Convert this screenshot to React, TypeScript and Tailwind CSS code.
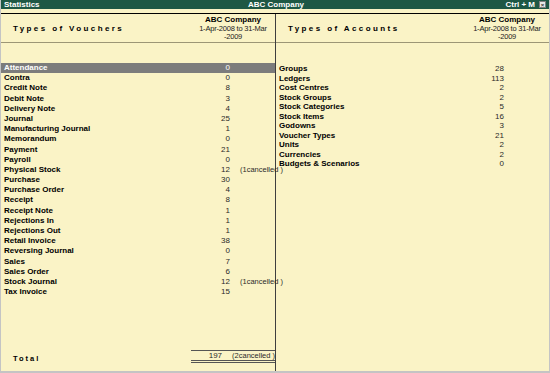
import React from 'react';

type Row = { name: string; value: string; note?: string };

const vouchers: Row[] = [
  { name: 'Attendance', value: '0' },
  { name: 'Contra', value: '0' },
  { name: 'Credit Note', value: '8' },
  { name: 'Debit Note', value: '3' },
  { name: 'Delivery Note', value: '4' },
  { name: 'Journal', value: '25' },
  { name: 'Manufacturing Journal', value: '1' },
  { name: 'Memorandum', value: '0' },
  { name: 'Payment', value: '21' },
  { name: 'Payroll', value: '0' },
  { name: 'Physical Stock', value: '12', note: '(1cancelled )' },
  { name: 'Purchase', value: '30' },
  { name: 'Purchase Order', value: '4' },
  { name: 'Receipt', value: '8' },
  { name: 'Receipt Note', value: '1' },
  { name: 'Rejections In', value: '1' },
  { name: 'Rejections Out', value: '1' },
  { name: 'Retail Invoice', value: '38' },
  { name: 'Reversing Journal', value: '0' },
  { name: 'Sales', value: '7' },
  { name: 'Sales Order', value: '6' },
  { name: 'Stock Journal', value: '12', note: '(1cancelled )' },
  { name: 'Tax Invoice', value: '15' },
];

const accounts: Row[] = [
  { name: 'Groups', value: '28' },
  { name: 'Ledgers', value: '113' },
  { name: 'Cost Centres', value: '2' },
  { name: 'Stock Groups', value: '2' },
  { name: 'Stock Categories', value: '5' },
  { name: 'Stock Items', value: '16' },
  { name: 'Godowns', value: '3' },
  { name: 'Voucher Types', value: '21' },
  { name: 'Units', value: '2' },
  { name: 'Currencies', value: '2' },
  { name: 'Budgets & Scenarios', value: '0' },
];

const ColumnHeader: React.FC<{ title: string }> = ({ title }) => (
  <div className="h-[29px] flex items-center border-b border-[#9c9676]">
    <div className="flex-1 pl-[12px] pt-[2px] text-[8px] font-bold tracking-[2.4px] text-black whitespace-nowrap">{title}</div>
    <div className="w-[84px] pt-[2px] text-center text-[7.5px] leading-[8.8px] tracking-[-0.2px] text-[#222] whitespace-nowrap">
      <div className="font-bold text-black text-[8px] tracking-normal">ABC Company</div>
      <div>1-Apr-2008 to 31-Mar</div>
      <div>-2009</div>
    </div>
  </div>
);

const ListRow: React.FC<{ row: Row; active?: boolean; tall?: boolean }> = ({ row, active, tall }) => (
  <div
    className={
      (tall ? 'h-[10.2px] leading-[10.2px] ' : 'h-[9.5px] leading-[9.5px] ') +
      'flex items-center text-[8px] ' +
      (active ? 'bg-[#7c7c7c] text-white' : 'text-black')
    }
  >
    <span className="flex-1 pl-[3px] font-bold whitespace-nowrap">{row.name}</span>
    <span className={'w-[40px] text-right ' + (active ? 'text-white' : 'text-[#2a2a2a]')}>{row.value}</span>
    <span className="w-[45px] pl-[10px] text-[7.5px] text-[#2a2a2a] whitespace-nowrap">{row.note}</span>
  </div>
);

export default function App() {
  return (
    <div className="w-[550px] h-[373px] flex flex-col bg-[#faf3c6] border-x border-b-2 border-[#c4c4c4] font-['Liberation_Sans',Arial,sans-serif] overflow-hidden">
      {/* title bar */}
      <div className="h-[9px] bg-[#1e5845] flex items-center px-[3px] text-white text-[8px] font-bold leading-[9px] relative">
        <span>Statistics</span>
        <span className="absolute left-[225px] w-[100px] text-center whitespace-nowrap">ABC Company</span>
        <span className="ml-auto mr-[4px] whitespace-nowrap">Ctrl + M</span>
        <span className="w-[7px] h-[7px] bg-[#e8e8e8] border border-[#808080] flex items-center justify-center text-[#333] text-[6px] leading-none">
          ×
        </span>
      </div>
      <div className="h-[4px]" />

      <div className="flex-1 flex border-t border-black">
        {/* vouchers */}
        <div className="w-[275px] flex flex-col border-r border-[#3e3e3e]">
          <ColumnHeader title="Types of Vouchers" />
          <div className="h-[20px]" />
          <div>
            {vouchers.map((r, i) => (
              <ListRow key={r.name} row={r} active={i === 0} tall />
            ))}
          </div>
          <div className="flex-1" />
          <div className="flex items-center mb-[7px]">
            <div className="flex-1 pl-[12px] pt-[3px] text-[7.5px] font-bold tracking-[2px] text-black">Total</div>
            <div className="w-[84px] flex items-center h-[13px] border-t border-b-[3px] border-double border-t-[#555] border-b-[#555] text-[8px] text-[#2a2a2a]">
              <span className="w-[39px] text-right">197</span>
              <span className="pl-[10px] text-[7.5px] whitespace-nowrap">(2cancelled )</span>
            </div>
          </div>
        </div>

        {/* accounts */}
        <div className="flex-1 flex flex-col">
          <ColumnHeader title="Types of Accounts" />
          <div className="h-[21px]" />
          <div>
            {accounts.map(r => (
              <ListRow key={r.name} row={r} />
            ))}
          </div>
        </div>
      </div>
    </div>
  );
}
